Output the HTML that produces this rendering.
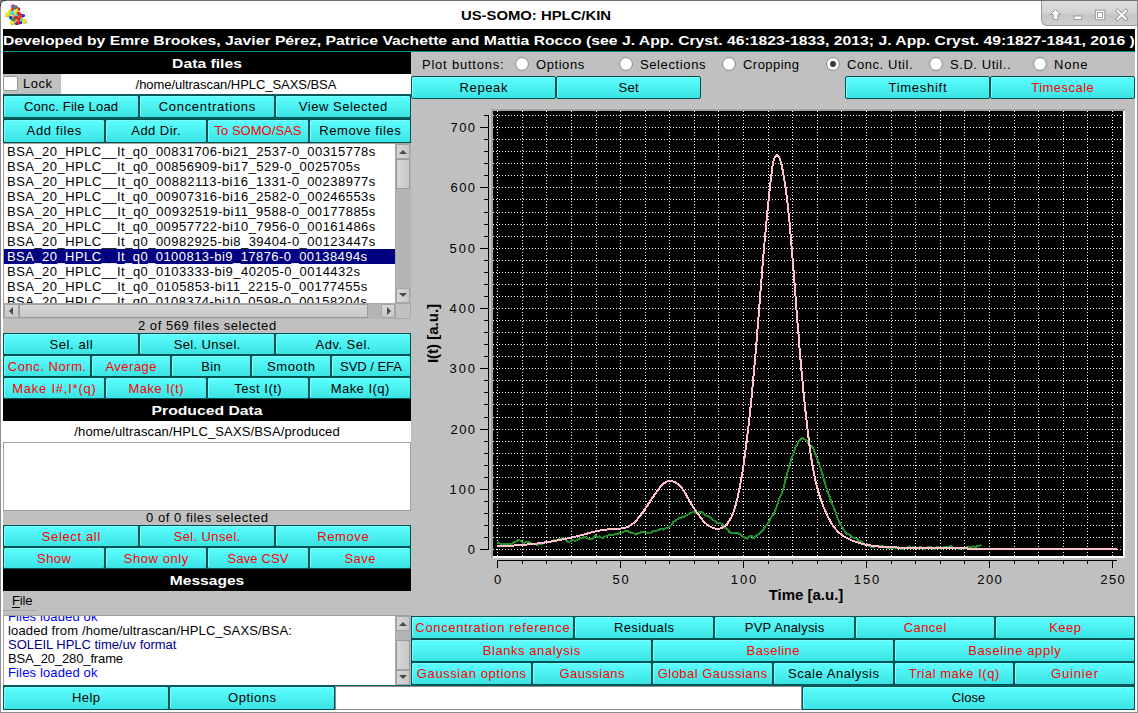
<!DOCTYPE html><html><head><meta charset="utf-8"><style>*{margin:0;padding:0;box-sizing:border-box}
html,body{width:1138px;height:713px;overflow:hidden;background:#c0c0c0}
body{position:relative;font-family:"Liberation Sans",sans-serif;font-size:13px;color:#000}
.a{position:absolute}
.t{white-space:nowrap;line-height:15px}
.btn{border:1px solid #005252;border-radius:2px;background:linear-gradient(#5efefe,#3ae4e4);box-shadow:inset 1px 1px 0 #7effff}
</style></head><body><div class="a" style="left:0;top:0;width:1138px;height:713px;background:#c0c0c0"></div>
<div class="a" style="left:0px;top:0px;width:1138px;height:29px;background:#fff"></div>
<div class="a" style="left:0px;top:0px;width:1138px;height:1px;background:#6e6e6e"></div>
<div class="a" style="left:0px;top:0px;width:1px;height:713px;background:#8c8c8c"></div>
<div class="a" style="left:1137px;top:0px;width:1px;height:713px;background:#8c8c8c"></div>
<div class="a" style="left:0px;top:712px;width:1138px;height:1px;background:#8c8c8c"></div>
<div class="a" style="left:1px;top:29px;width:2px;height:683px;background:#fff"></div>
<div class="a" style="left:1135px;top:29px;width:2px;height:683px;background:#fff"></div>
<div class="a" style="left:1px;top:710px;width:1136px;height:2px;background:#fff"></div>
<div class="a" style="left:0;top:0;width:6px;height:6px;background:#fff;border-top-left-radius:5px;border-left:1px solid #333;border-top:1px solid #333"></div>
<div class="a t" style="left:400px;width:272px;text-align:center;top:8px;font-size:13px;font-weight:bold;color:#000;transform:scaleX(1.1423)">US-SOMO: HPLC/KIN</div>
<div class="a" style="left:1041px;top:1px;width:96px;height:25px;background:linear-gradient(#dedede,#d4d4d4 45%,#c6c6c6 60%,#d0d0d0);border-left:1px solid #9a9a9a;border-bottom:1px solid #9a9a9a;border-bottom-left-radius:6px"></div>
<svg class="a" style="left:1041px;top:0" width="96" height="28" viewBox="1041 0 96 28">
<g fill="#fff" stroke="#8a8a8a" stroke-width="0.8">
<path d="M1055.5 9.5 L1060.5 14.5 L1057.8 14.5 L1057.8 19.5 L1053.2 19.5 L1053.2 14.5 L1050.5 14.5 Z"/>
<rect x="1074" y="16" width="7.7" height="3.4"/>
<rect x="1095.3" y="10.2" width="9.5" height="9.5"/>
</g>
<rect x="1097.6" y="12.5" width="4.9" height="4.9" fill="none" stroke="#8a8a8a" stroke-width="0.8"/>
<g stroke="#8a8a8a" stroke-width="3.6" stroke-linecap="square"><path d="M1117.5 10.7 L1126 19 M1126 10.7 L1117.5 19"/></g>
<g stroke="#fff" stroke-width="2" stroke-linecap="square"><path d="M1117.5 10.7 L1126 19 M1126 10.7 L1117.5 19"/></g>
</svg>
<svg class="a" style="left:0;top:0" width="32" height="28"><defs><radialGradient id="sg0" cx="0.4" cy="0.38" r="0.65"><stop offset="0" stop-color="#4b4be7"/><stop offset="0.6" stop-color="#1010e0"/><stop offset="1" stop-color="#0b0b9c"/></radialGradient><radialGradient id="sg1" cx="0.4" cy="0.38" r="0.65"><stop offset="0" stop-color="#57e7e7"/><stop offset="0.6" stop-color="#20e0e0"/><stop offset="1" stop-color="#169c9c"/></radialGradient><radialGradient id="sg2" cx="0.4" cy="0.38" r="0.65"><stop offset="0" stop-color="#5f9b77"/><stop offset="0.6" stop-color="#2a7a4a"/><stop offset="1" stop-color="#1d5533"/></radialGradient><radialGradient id="sg3" cx="0.4" cy="0.38" r="0.65"><stop offset="0" stop-color="#d859d8"/><stop offset="0.6" stop-color="#cc22cc"/><stop offset="1" stop-color="#8e178e"/></radialGradient><radialGradient id="sg4" cx="0.4" cy="0.38" r="0.65"><stop offset="0" stop-color="#e74b4b"/><stop offset="0.6" stop-color="#e01010"/><stop offset="1" stop-color="#9c0b0b"/></radialGradient><radialGradient id="sg5" cx="0.4" cy="0.38" r="0.65"><stop offset="0" stop-color="#ede74b"/><stop offset="0.6" stop-color="#e8e010"/><stop offset="1" stop-color="#a29c0b"/></radialGradient><radialGradient id="sg6" cx="0.4" cy="0.38" r="0.65"><stop offset="0" stop-color="#f3ab4b"/><stop offset="0.6" stop-color="#f09010"/><stop offset="1" stop-color="#a8640b"/></radialGradient></defs><circle cx="13.0" cy="6.3" r="2.13" fill="url(#sg3)"/><circle cx="15.3" cy="7.6" r="2.35" fill="url(#sg2)"/><circle cx="18.2" cy="9.2" r="2.02" fill="url(#sg4)"/><circle cx="12.2" cy="9.8" r="1.46" fill="url(#sg4)"/><circle cx="10.0" cy="11.0" r="1.79" fill="url(#sg5)"/><circle cx="16.8" cy="10.5" r="1.90" fill="url(#sg5)"/><circle cx="12.3" cy="13.0" r="2.13" fill="url(#sg1)"/><circle cx="7.9" cy="14.5" r="2.58" fill="url(#sg5)"/><circle cx="15.6" cy="13.2" r="1.68" fill="url(#sg5)"/><circle cx="18.7" cy="13.8" r="2.13" fill="url(#sg4)"/><circle cx="21.5" cy="15.7" r="1.90" fill="url(#sg4)"/><circle cx="23.5" cy="15.8" r="1.46" fill="url(#sg0)"/><circle cx="13.5" cy="16.0" r="1.23" fill="url(#sg6)"/><circle cx="16.8" cy="15.8" r="1.68" fill="url(#sg1)"/><circle cx="10.8" cy="17.8" r="1.68" fill="url(#sg0)"/><circle cx="15.8" cy="17.5" r="1.79" fill="url(#sg4)"/><circle cx="18.8" cy="18.5" r="2.13" fill="url(#sg4)"/><circle cx="13.3" cy="19.6" r="2.35" fill="url(#sg2)"/><circle cx="21.5" cy="18.8" r="1.23" fill="url(#sg6)"/><circle cx="16.0" cy="20.5" r="1.23" fill="url(#sg6)"/><circle cx="21.0" cy="20.5" r="1.46" fill="url(#sg1)"/><circle cx="24.6" cy="21.4" r="2.35" fill="url(#sg5)"/><circle cx="12.4" cy="23.0" r="2.35" fill="url(#sg5)"/><circle cx="16.5" cy="23.5" r="1.57" fill="url(#sg0)"/><circle cx="18.5" cy="22.7" r="2.13" fill="url(#sg4)"/><circle cx="21.0" cy="22.8" r="1.23" fill="url(#sg0)"/></svg>
<div class="a" style="left:3px;top:29px;width:1132px;height:22px;background:#000"></div>
<div class="a" style="left:3px;top:51px;width:1132px;height:1px;background:#0b8a8a"></div>
<div class="a t" style="left:3px;top:33px;font-size:13px;font-weight:bold;color:#fff;transform-origin:0 0;transform:scaleX(1.2099);">Developed by Emre Brookes, Javier Pérez, Patrice Vachette and Mattia Rocco (see J. App. Cryst. 46:1823-1833, 2013; J. App. Cryst. 49:1827-1841, 2016 )</div>
<div class="a" style="left:3px;top:52px;width:408px;height:22px;background:#000"></div>
<div class="a t" style="left:3px;width:408px;text-align:center;top:56px;font-size:13px;font-weight:bold;color:#fff;transform:scaleX(1.2070)">Data files</div>
<div class="a" style="left:3px;top:74px;width:58px;height:21px;background:#c0c0c0"></div>
<div class="a" style="left:3px;top:76px;width:15px;height:15px;background:#fff;border:1px solid #9a9a9a;border-radius:2px"></div>
<div class="a t" style="left:23px;top:76px;font-size:13px;color:#000;letter-spacing:0.480px;">Lock</div>
<div class="a" style="left:61px;top:74px;width:350px;height:21px;background:#fff"></div>
<div class="a t" style="left:61px;width:350px;text-align:center;top:77px;font-size:13px;color:#000;letter-spacing:-0.054px;text-indent:-0.054px">/home/ultrascan/HPLC_SAXS/BSA</div>
<div class="a" style="left:3px;top:94px;width:408px;height:50px;background:#006262"></div>
<div class="a btn" style="left:3px;top:95px;width:136px;height:23px"></div>
<div class="a t" style="left:3px;width:136px;text-align:center;top:99px;font-size:13px;color:#000;letter-spacing:0.221px;text-indent:0.221px">Conc. File Load</div>
<div class="a btn" style="left:139px;top:95px;width:136px;height:23px"></div>
<div class="a t" style="left:139px;width:136px;text-align:center;top:99px;font-size:13px;color:#000;letter-spacing:0.697px;text-indent:0.697px">Concentrations</div>
<div class="a btn" style="left:275px;top:95px;width:136px;height:23px"></div>
<div class="a t" style="left:275px;width:136px;text-align:center;top:99px;font-size:13px;color:#000;letter-spacing:0.517px;text-indent:0.517px">View Selected</div>
<div class="a btn" style="left:3px;top:119px;width:102px;height:24px"></div>
<div class="a t" style="left:3px;width:102px;text-align:center;top:123px;font-size:13px;color:#000;letter-spacing:0.612px;text-indent:0.612px">Add files</div>
<div class="a btn" style="left:105px;top:119px;width:102px;height:24px"></div>
<div class="a t" style="left:105px;width:102px;text-align:center;top:123px;font-size:13px;color:#000;letter-spacing:0.429px;text-indent:0.429px">Add Dir.</div>
<div class="a btn" style="left:207px;top:119px;width:102px;height:24px"></div>
<div class="a t" style="left:207px;width:102px;text-align:center;top:123px;font-size:13px;color:#ff0000;letter-spacing:0.024px;text-indent:0.024px">To SOMO/SAS</div>
<div class="a btn" style="left:309px;top:119px;width:102px;height:24px"></div>
<div class="a t" style="left:309px;width:102px;text-align:center;top:123px;font-size:13px;color:#000;letter-spacing:0.578px;text-indent:0.578px">Remove files</div>
<div class="a" style="left:3px;top:143px;width:408px;height:176px;background:#fff;border:1px solid #a0a0a0"></div>
<div class="a" style="left:4px;top:144px;width:391px;height:159px;overflow:hidden">
<div class="a t" style="left:3px;top:0px;line-height:15px;font-size:13px;color:#000;letter-spacing:0.459px">BSA_20_HPLC__It_q0_00831706-bi21_2537-0_00315778s</div>
<div class="a t" style="left:3px;top:15px;line-height:15px;font-size:13px;color:#000;letter-spacing:0.460px">BSA_20_HPLC__It_q0_00856909-bi17_529-0_0025705s</div>
<div class="a t" style="left:3px;top:30px;line-height:15px;font-size:13px;color:#000;letter-spacing:0.480px">BSA_20_HPLC__It_q0_00882113-bi16_1331-0_00238977s</div>
<div class="a t" style="left:3px;top:45px;line-height:15px;font-size:13px;color:#000;letter-spacing:0.459px">BSA_20_HPLC__It_q0_00907316-bi16_2582-0_00246553s</div>
<div class="a t" style="left:3px;top:60px;line-height:15px;font-size:13px;color:#000;letter-spacing:0.480px">BSA_20_HPLC__It_q0_00932519-bi11_9588-0_00177885s</div>
<div class="a t" style="left:3px;top:75px;line-height:15px;font-size:13px;color:#000;letter-spacing:0.459px">BSA_20_HPLC__It_q0_00957722-bi10_7956-0_00161486s</div>
<div class="a t" style="left:3px;top:90px;line-height:15px;font-size:13px;color:#000;letter-spacing:0.459px">BSA_20_HPLC__It_q0_00982925-bi8_39404-0_00123447s</div>
<div class="a" style="left:0;top:105px;width:391px;height:15px;background:#000080"></div>
<div class="a t" style="left:3px;top:105px;line-height:15px;font-size:13px;color:#fff;letter-spacing:0.449px">BSA_20_HPLC__It_q0_0100813-bi9_17876-0_00138494s</div>
<div class="a t" style="left:3px;top:120px;line-height:15px;font-size:13px;color:#000;letter-spacing:0.460px">BSA_20_HPLC__It_q0_0103333-bi9_40205-0_0014432s</div>
<div class="a t" style="left:3px;top:135px;line-height:15px;font-size:13px;color:#000;letter-spacing:0.470px">BSA_20_HPLC__It_q0_0105853-bi11_2215-0_00177455s</div>
<div class="a t" style="left:3px;top:150px;line-height:15px;font-size:13px;color:#000;letter-spacing:0.449px">BSA_20_HPLC__It_q0_0108374-bi10_0598-0_00158204s</div>
</div>
<div class="a" style="left:395px;top:144px;width:16px;height:159px;background:#b4b4b4;border-left:1px solid #a8a8a8"></div>
<div class="a" style="left:396px;top:159px;width:14px;height:30px;background:linear-gradient(90deg,#d6d6d6,#c8c8c8);border:1px solid #9a9a9a"></div>
<div class="a" style="left:396px;top:144px;width:14px;height:15px;background:linear-gradient(90deg,#d6d6d6,#c8c8c8);border:1px solid #a4a4a4"></div>
<div class="a" style="left:396px;top:288px;width:14px;height:15px;background:linear-gradient(90deg,#d6d6d6,#c8c8c8);border:1px solid #a4a4a4"></div>
<svg class="a" style="left:395px;top:144px" width="16" height="15"><path d="M4 10 L12 10 L8 6 Z" fill="#4a4a4a"/></svg>
<svg class="a" style="left:395px;top:288px" width="16" height="15"><path d="M4 5 L12 5 L8 9 Z" fill="#4a4a4a"/></svg>
<div class="a" style="left:4px;top:303px;width:391px;height:16px;background:#b4b4b4;border-top:1px solid #a8a8a8"></div>
<div class="a" style="left:4px;top:304px;width:15px;height:14px;background:linear-gradient(#d6d6d6,#c8c8c8);border:1px solid #a4a4a4"></div>
<div class="a" style="left:19px;top:304px;width:349px;height:14px;background:linear-gradient(#d6d6d6,#c8c8c8);border:1px solid #9a9a9a"></div>
<div class="a" style="left:381px;top:304px;width:14px;height:14px;background:linear-gradient(#d6d6d6,#c8c8c8);border:1px solid #a4a4a4"></div>
<svg class="a" style="left:4px;top:304px" width="15" height="14"><path d="M9 3 L9 11 L5 7 Z" fill="#4a4a4a"/></svg>
<svg class="a" style="left:381px;top:304px" width="15" height="14"><path d="M6 3 L6 11 L10 7 Z" fill="#4a4a4a"/></svg>
<div class="a" style="left:395px;top:303px;width:16px;height:16px;background:#c0c0c0;border:1px solid #a8a8a8"></div>
<div class="a t" style="left:3px;width:408px;text-align:center;top:318px;font-size:13px;color:#000;letter-spacing:0.568px;text-indent:0.568px">2 of 569 files selected</div>
<div class="a" style="left:3px;top:333px;width:408px;height:66px;background:#006262"></div>
<div class="a btn" style="left:3px;top:333px;width:136px;height:22px"></div>
<div class="a t" style="left:3px;width:136px;text-align:center;top:337px;font-size:13px;color:#000;letter-spacing:0.594px;text-indent:0.594px">Sel. all</div>
<div class="a btn" style="left:139px;top:333px;width:136px;height:22px"></div>
<div class="a t" style="left:139px;width:136px;text-align:center;top:337px;font-size:13px;color:#000;letter-spacing:0.368px;text-indent:0.368px">Sel. Unsel.</div>
<div class="a btn" style="left:275px;top:333px;width:136px;height:22px"></div>
<div class="a t" style="left:275px;width:136px;text-align:center;top:337px;font-size:13px;color:#000;letter-spacing:0.487px;text-indent:0.487px">Adv. Sel.</div>
<div class="a btn" style="left:3px;top:355px;width:88px;height:22px"></div>
<div class="a t" style="left:3px;width:88px;text-align:center;top:359px;font-size:13px;color:#ff0000;letter-spacing:0.544px;text-indent:0.544px">Conc. Norm.</div>
<div class="a btn" style="left:91px;top:355px;width:80px;height:22px"></div>
<div class="a t" style="left:91px;width:80px;text-align:center;top:359px;font-size:13px;color:#ff0000;letter-spacing:0.493px;text-indent:0.493px">Average</div>
<div class="a btn" style="left:171px;top:355px;width:80px;height:22px"></div>
<div class="a t" style="left:171px;width:80px;text-align:center;top:359px;font-size:13px;color:#000;letter-spacing:0.310px;text-indent:0.310px">Bin</div>
<div class="a btn" style="left:251px;top:355px;width:80px;height:22px"></div>
<div class="a t" style="left:251px;width:80px;text-align:center;top:359px;font-size:13px;color:#000;letter-spacing:0.608px;text-indent:0.608px">Smooth</div>
<div class="a btn" style="left:331px;top:355px;width:80px;height:22px"></div>
<div class="a t" style="left:331px;width:80px;text-align:center;top:359px;font-size:13px;color:#000;letter-spacing:-0.030px;text-indent:-0.030px">SVD / EFA</div>
<div class="a btn" style="left:3px;top:377px;width:102px;height:22px"></div>
<div class="a t" style="left:3px;width:102px;text-align:center;top:381px;font-size:13px;color:#ff0000;letter-spacing:0.777px;text-indent:0.777px">Make I#,I*(q)</div>
<div class="a btn" style="left:105px;top:377px;width:102px;height:22px"></div>
<div class="a t" style="left:105px;width:102px;text-align:center;top:381px;font-size:13px;color:#ff0000;letter-spacing:0.487px;text-indent:0.487px">Make I(t)</div>
<div class="a btn" style="left:207px;top:377px;width:102px;height:22px"></div>
<div class="a t" style="left:207px;width:102px;text-align:center;top:381px;font-size:13px;color:#000;letter-spacing:0.505px;text-indent:0.505px">Test I(t)</div>
<div class="a btn" style="left:309px;top:377px;width:102px;height:22px"></div>
<div class="a t" style="left:309px;width:102px;text-align:center;top:381px;font-size:13px;color:#000;letter-spacing:0.478px;text-indent:0.478px">Make I(q)</div>
<div class="a" style="left:3px;top:399px;width:408px;height:22px;background:#000"></div>
<div class="a t" style="left:3px;width:408px;text-align:center;top:403px;font-size:13px;font-weight:bold;color:#fff;transform:scaleX(1.2088)">Produced Data</div>
<div class="a" style="left:3px;top:421px;width:408px;height:21px;background:#fff"></div>
<div class="a t" style="left:3px;width:408px;text-align:center;top:424px;font-size:13px;color:#000;letter-spacing:0.143px;text-indent:0.143px">/home/ultrascan/HPLC_SAXS/BSA/produced</div>
<div class="a" style="left:3px;top:442px;width:408px;height:69px;background:#fff;border:1px solid #a0a0a0"></div>
<div class="a t" style="left:3px;width:408px;text-align:center;top:510px;font-size:13px;color:#000;letter-spacing:0.530px;text-indent:0.530px">0 of 0 files selected</div>
<div class="a" style="left:3px;top:525px;width:408px;height:44px;background:#006262"></div>
<div class="a btn" style="left:3px;top:525px;width:136px;height:22px"></div>
<div class="a t" style="left:3px;width:136px;text-align:center;top:529px;font-size:13px;color:#ff0000;letter-spacing:0.649px;text-indent:0.649px">Select all</div>
<div class="a btn" style="left:139px;top:525px;width:136px;height:22px"></div>
<div class="a t" style="left:139px;width:136px;text-align:center;top:529px;font-size:13px;color:#ff0000;letter-spacing:0.368px;text-indent:0.368px">Sel. Unsel.</div>
<div class="a btn" style="left:275px;top:525px;width:136px;height:22px"></div>
<div class="a t" style="left:275px;width:136px;text-align:center;top:529px;font-size:13px;color:#ff0000;letter-spacing:0.596px;text-indent:0.596px">Remove</div>
<div class="a btn" style="left:3px;top:547px;width:102px;height:22px"></div>
<div class="a t" style="left:3px;width:102px;text-align:center;top:551px;font-size:13px;color:#ff0000;letter-spacing:0.447px;text-indent:0.447px">Show</div>
<div class="a btn" style="left:105px;top:547px;width:102px;height:22px"></div>
<div class="a t" style="left:105px;width:102px;text-align:center;top:551px;font-size:13px;color:#ff0000;letter-spacing:0.587px;text-indent:0.587px">Show only</div>
<div class="a btn" style="left:207px;top:547px;width:102px;height:22px"></div>
<div class="a t" style="left:207px;width:102px;text-align:center;top:551px;font-size:13px;color:#ff0000;letter-spacing:0.111px;text-indent:0.111px">Save CSV</div>
<div class="a btn" style="left:309px;top:547px;width:102px;height:22px"></div>
<div class="a t" style="left:309px;width:102px;text-align:center;top:551px;font-size:13px;color:#ff0000;letter-spacing:0.467px;text-indent:0.467px">Save</div>
<div class="a" style="left:3px;top:569px;width:408px;height:22px;background:#000"></div>
<div class="a t" style="left:3px;width:408px;text-align:center;top:573px;font-size:13px;font-weight:bold;color:#fff;transform:scaleX(1.1967)">Messages</div>
<div class="a t" style="left:12px;top:593px;font-size:13px;color:#000;letter-spacing:-0.133px;">File</div>
<div class="a" style="left:12px;top:607px;width:8px;height:1px;background:#000"></div>
<div class="a" style="left:3px;top:610px;width:34px;height:1px;background:#a8a8a8"></div>
<div class="a" style="left:3px;top:615px;width:408px;height:71px;background:#fff;border:1px solid #a0a0a0"></div>
<div class="a" style="left:4px;top:616px;width:391px;height:69px;overflow:hidden">
<div class="a t" style="left:4px;top:-7px;line-height:15px;font-size:13px;color:#0000ff;letter-spacing:0.143px">Files loaded ok</div>
<div class="a t" style="left:4px;top:7px;line-height:15px;font-size:13px;color:#000;letter-spacing:0.137px">loaded from /home/ultrascan/HPLC_SAXS/BSA:</div>
<div class="a t" style="left:4px;top:21px;line-height:15px;font-size:13px;color:#00008c;letter-spacing:-0.040px">SOLEIL HPLC time/uv format</div>
<div class="a t" style="left:4px;top:35px;line-height:15px;font-size:13px;color:#000;letter-spacing:-0.133px">BSA_20_280_frame</div>
<div class="a t" style="left:4px;top:49px;line-height:15px;font-size:13px;color:#0000ff;letter-spacing:0.143px">Files loaded ok</div>
</div>
<div class="a" style="left:395px;top:616px;width:16px;height:69px;background:#b4b4b4;border-left:1px solid #a8a8a8"></div>
<div class="a" style="left:396px;top:640px;width:14px;height:30px;background:linear-gradient(90deg,#d6d6d6,#c8c8c8);border:1px solid #9a9a9a"></div>
<div class="a" style="left:396px;top:616px;width:14px;height:15px;background:linear-gradient(90deg,#d6d6d6,#c8c8c8);border:1px solid #a4a4a4"></div>
<div class="a" style="left:396px;top:670px;width:14px;height:15px;background:linear-gradient(90deg,#d6d6d6,#c8c8c8);border:1px solid #a4a4a4"></div>
<svg class="a" style="left:395px;top:616px" width="16" height="15"><path d="M4 10 L12 10 L8 6 Z" fill="#4a4a4a"/></svg>
<svg class="a" style="left:395px;top:670px" width="16" height="15"><path d="M4 5 L12 5 L8 9 Z" fill="#4a4a4a"/></svg>
<div class="a" style="left:3px;top:685px;width:1132px;height:25px;background:#006262"></div>
<div class="a btn" style="left:3px;top:686px;width:166px;height:24px"></div>
<div class="a t" style="left:3px;width:166px;text-align:center;top:690px;font-size:13px;color:#000;letter-spacing:0.480px;text-indent:0.480px">Help</div>
<div class="a btn" style="left:169px;top:686px;width:166px;height:24px"></div>
<div class="a t" style="left:169px;width:166px;text-align:center;top:690px;font-size:13px;color:#000;letter-spacing:0.507px;text-indent:0.507px">Options</div>
<div class="a" style="left:335px;top:686px;width:467px;height:24px;background:#fff;border:1px solid #8c8c8c"></div>
<div class="a btn" style="left:802px;top:686px;width:333px;height:24px"></div>
<div class="a t" style="left:802px;width:333px;text-align:center;top:690px;font-size:13px;color:#000;letter-spacing:0.085px;text-indent:0.085px">Close</div>
<div class="a t" style="left:422px;top:57px;font-size:13px;color:#000;letter-spacing:0.775px;">Plot buttons:</div>
<svg class="a" style="left:514px;top:56px" width="16" height="16"><circle cx="8" cy="8" r="6.4" fill="#fff" stroke="#7a7a7a" stroke-width="0.9"/></svg>
<div class="a t" style="left:536px;top:57px;font-size:13px;color:#000;letter-spacing:0.567px;">Options</div>
<svg class="a" style="left:618px;top:56px" width="16" height="16"><circle cx="8" cy="8" r="6.4" fill="#fff" stroke="#7a7a7a" stroke-width="0.9"/></svg>
<div class="a t" style="left:640px;top:57px;font-size:13px;color:#000;letter-spacing:0.611px;">Selections</div>
<svg class="a" style="left:721px;top:56px" width="16" height="16"><circle cx="8" cy="8" r="6.4" fill="#fff" stroke="#7a7a7a" stroke-width="0.9"/></svg>
<div class="a t" style="left:743px;top:57px;font-size:13px;color:#000;letter-spacing:0.471px;">Cropping</div>
<svg class="a" style="left:825px;top:56px" width="16" height="16"><circle cx="8" cy="8" r="6.4" fill="#fff" stroke="#7a7a7a" stroke-width="0.9"/><circle cx="8" cy="8" r="3" fill="#3a3a3a"/></svg>
<div class="a t" style="left:847px;top:57px;font-size:13px;color:#000;letter-spacing:0.560px;">Conc. Util.</div>
<svg class="a" style="left:928px;top:56px" width="16" height="16"><circle cx="8" cy="8" r="6.4" fill="#fff" stroke="#7a7a7a" stroke-width="0.9"/></svg>
<div class="a t" style="left:950px;top:57px;font-size:13px;color:#000;letter-spacing:0.560px;">S.D. Util..</div>
<svg class="a" style="left:1032px;top:56px" width="16" height="16"><circle cx="8" cy="8" r="6.4" fill="#fff" stroke="#7a7a7a" stroke-width="0.9"/></svg>
<div class="a t" style="left:1054px;top:57px;font-size:13px;color:#000;letter-spacing:0.800px;">None</div>
<div class="a btn" style="left:411px;top:76px;width:145px;height:23px"></div>
<div class="a t" style="left:411px;width:145px;text-align:center;top:80px;font-size:13px;color:#000;letter-spacing:0.612px;text-indent:0.612px">Repeak</div>
<div class="a btn" style="left:556px;top:76px;width:145px;height:23px"></div>
<div class="a t" style="left:556px;width:145px;text-align:center;top:80px;font-size:13px;color:#000;letter-spacing:0.300px;text-indent:0.300px">Set</div>
<div class="a btn" style="left:845px;top:76px;width:145px;height:23px"></div>
<div class="a t" style="left:845px;width:145px;text-align:center;top:80px;font-size:13px;color:#000;letter-spacing:0.725px;text-indent:0.725px">Timeshift</div>
<div class="a btn" style="left:990px;top:76px;width:145px;height:23px"></div>
<div class="a t" style="left:990px;width:145px;text-align:center;top:80px;font-size:13px;color:#ff0000;letter-spacing:0.465px;text-indent:0.465px">Timescale</div>
<div class="a" style="left:411px;top:616px;width:724px;height:70px;background:#006262"></div>
<div class="a btn" style="left:411px;top:616px;width:163px;height:23px"></div>
<div class="a t" style="left:411px;width:163px;text-align:center;top:620px;font-size:13px;color:#ff0000;letter-spacing:0.676px;text-indent:0.676px">Concentration reference</div>
<div class="a btn" style="left:574px;top:616px;width:140px;height:23px"></div>
<div class="a t" style="left:574px;width:140px;text-align:center;top:620px;font-size:13px;color:#000;letter-spacing:0.350px;text-indent:0.350px">Residuals</div>
<div class="a btn" style="left:714px;top:616px;width:141px;height:23px"></div>
<div class="a t" style="left:714px;width:141px;text-align:center;top:620px;font-size:13px;color:#000;letter-spacing:0.218px;text-indent:0.218px">PVP Analysis</div>
<div class="a btn" style="left:855px;top:616px;width:140px;height:23px"></div>
<div class="a t" style="left:855px;width:140px;text-align:center;top:620px;font-size:13px;color:#ff0000;letter-spacing:0.432px;text-indent:0.432px">Cancel</div>
<div class="a btn" style="left:995px;top:616px;width:140px;height:23px"></div>
<div class="a t" style="left:995px;width:140px;text-align:center;top:620px;font-size:13px;color:#ff0000;letter-spacing:0.460px;text-indent:0.460px">Keep</div>
<div class="a btn" style="left:411px;top:639px;width:241px;height:23px"></div>
<div class="a t" style="left:411px;width:241px;text-align:center;top:643px;font-size:13px;color:#ff0000;letter-spacing:0.574px;text-indent:0.574px">Blanks analysis</div>
<div class="a btn" style="left:652px;top:639px;width:242px;height:23px"></div>
<div class="a t" style="left:652px;width:242px;text-align:center;top:643px;font-size:13px;color:#ff0000;letter-spacing:0.420px;text-indent:0.420px">Baseline</div>
<div class="a btn" style="left:894px;top:639px;width:241px;height:23px"></div>
<div class="a t" style="left:894px;width:241px;text-align:center;top:643px;font-size:13px;color:#ff0000;letter-spacing:0.626px;text-indent:0.626px">Baseline apply</div>
<div class="a btn" style="left:411px;top:662px;width:121px;height:23px"></div>
<div class="a t" style="left:411px;width:121px;text-align:center;top:666px;font-size:13px;color:#ff0000;letter-spacing:0.587px;text-indent:0.587px">Gaussian options</div>
<div class="a btn" style="left:532px;top:662px;width:120px;height:23px"></div>
<div class="a t" style="left:532px;width:120px;text-align:center;top:666px;font-size:13px;color:#ff0000;letter-spacing:0.462px;text-indent:0.462px">Gaussians</div>
<div class="a btn" style="left:652px;top:662px;width:121px;height:23px"></div>
<div class="a t" style="left:652px;width:121px;text-align:center;top:666px;font-size:13px;color:#ff0000;letter-spacing:0.453px;text-indent:0.453px">Global Gaussians</div>
<div class="a btn" style="left:773px;top:662px;width:121px;height:23px"></div>
<div class="a t" style="left:773px;width:121px;text-align:center;top:666px;font-size:13px;color:#000;letter-spacing:0.552px;text-indent:0.552px">Scale Analysis</div>
<div class="a btn" style="left:894px;top:662px;width:120px;height:23px"></div>
<div class="a t" style="left:894px;width:120px;text-align:center;top:666px;font-size:13px;color:#ff0000;letter-spacing:0.511px;text-indent:0.511px">Trial make I(q)</div>
<div class="a btn" style="left:1014px;top:662px;width:121px;height:23px"></div>
<div class="a t" style="left:1014px;width:121px;text-align:center;top:666px;font-size:13px;color:#ff0000;letter-spacing:0.843px;text-indent:0.843px">Guinier</div>
<svg class="a" style="left:0;top:0" width="1138" height="713" viewBox="0 0 1138 713"><rect x="491" y="109" width="634" height="449" fill="#ffffff"/><path d="M491 109 H1125 V111 H493 V558 H491 Z" fill="#a4a4a4"/><rect x="493" y="111" width="630" height="445" fill="#000"/><path d="M497.5 111V556M522.5 111V556M546.5 111V556M571.5 111V556M596.5 111V556M620.5 111V556M645.5 111V556M669.5 111V556M694.5 111V556M718.5 111V556M743.5 111V556M768.5 111V556M792.5 111V556M817.5 111V556M841.5 111V556M866.5 111V556M891.5 111V556M915.5 111V556M940.5 111V556M964.5 111V556M989.5 111V556M1014.5 111V556M1038.5 111V556M1063.5 111V556M1087.5 111V556M1112.5 111V556" stroke="#fff" stroke-width="1" stroke-dasharray="1 2" shape-rendering="crispEdges"/><path d="M493 549.5H1123M493 537.5H1123M493 525.5H1123M493 513.5H1123M493 501.5H1123M493 489.5H1123M493 477.5H1123M493 465.5H1123M493 453.5H1123M493 441.5H1123M493 429.5H1123M493 417.5H1123M493 404.5H1123M493 392.5H1123M493 380.5H1123M493 368.5H1123M493 356.5H1123M493 344.5H1123M493 332.5H1123M493 320.5H1123M493 308.5H1123M493 296.5H1123M493 284.5H1123M493 272.5H1123M493 260.5H1123M493 248.5H1123M493 236.5H1123M493 224.5H1123M493 212.5H1123M493 199.5H1123M493 187.5H1123M493 175.5H1123M493 163.5H1123M493 151.5H1123M493 139.5H1123M493 127.5H1123M493 115.5H1123" stroke="#fff" stroke-width="1" stroke-dasharray="1 2" shape-rendering="crispEdges"/></svg>
<svg class="a" style="left:0;top:0" width="1138" height="713"><defs><clipPath id="cp"><rect x="493" y="111" width="630" height="445"/></clipPath></defs><g clip-path="url(#cp)" fill="none" stroke-width="2" stroke-linejoin="round" shape-rendering="crispEdges"><polyline points="497.5,543.5 499.5,543.3 501.5,544.4 503.5,543.6 505.5,544.6 507.5,544.3 509.5,543.9 511.5,544.4 513.5,542.2 515.5,541.7 517.5,540.4 519.5,540.2 521.5,541.7 523.5,543.4 525.5,542.1 527.5,541.9 529.5,542.3 531.5,543.5 533.5,543.5 535.5,543.7 537.5,545.2 539.5,543.7 541.5,544.5 543.5,542.8 545.5,542.1 547.5,541.7 549.5,541.7 551.5,542.0 553.5,540.2 555.5,540.3 557.5,539.8 559.5,538.7 561.5,538.5 563.5,538.2 565.5,539.9 567.5,541.9 569.5,541.9 571.5,540.4 573.5,540.3 575.5,540.8 577.5,539.7 579.5,538.4 581.5,538.5 583.5,537.6 585.5,536.6 587.5,538.2 589.5,539.1 591.5,539.1 593.5,537.3 595.5,535.2 597.5,537.2 599.5,536.4 601.5,537.8 603.5,537.9 605.5,536.0 607.5,535.8 609.5,534.4 611.5,534.9 613.5,534.6 615.5,534.0 617.5,534.4 619.5,533.0 621.5,532.8 623.5,531.8 625.5,530.9 627.5,530.9 629.5,532.1 631.5,532.8 633.5,533.0 635.5,534.8 637.5,533.5 639.5,533.2 641.5,531.7 643.5,532.0 645.5,532.7 647.5,532.7 649.5,532.5 651.5,532.5 653.5,530.9 655.5,531.2 657.5,530.1 659.5,529.5 661.5,528.9 663.5,529.7 665.5,528.1 667.5,527.8 669.5,526.4 671.5,525.2 673.5,521.8 675.5,520.7 677.5,519.0 679.5,518.0 681.5,517.5 683.5,517.2 685.5,515.8 687.5,514.8 689.5,513.3 691.5,512.6 693.5,511.9 695.5,513.5 697.5,512.7 699.5,511.8 701.5,511.8 703.5,513.7 705.5,515.3 707.5,516.1 709.5,516.9 711.5,518.9 713.5,520.1 715.5,521.7 717.5,523.0 719.5,523.1 721.5,523.7 723.5,526.0 725.5,528.1 727.5,529.0 729.5,532.4 731.5,532.6 733.5,532.9 735.5,533.0 737.5,532.6 739.5,534.1 741.5,535.1 743.5,537.4 745.5,537.6 747.5,538.6 749.5,536.0 751.5,535.7 753.5,538.4 755.5,536.6 757.5,534.9 759.5,533.6 761.5,531.3 763.5,529.3 765.5,526.0 767.5,524.2 769.5,520.5 771.5,517.1 773.5,514.6 775.5,509.7 777.5,504.2 779.5,498.2 781.5,494.0 783.5,488.1 785.5,479.6 787.5,472.3 789.5,465.1 791.5,458.6 793.5,453.0 795.5,446.9 797.5,443.9 799.5,440.1 801.5,438.1 803.5,438.3 805.5,439.9 807.5,441.9 809.5,444.7 811.5,445.7 813.5,449.2 815.5,454.6 817.5,459.6 819.5,464.9 821.5,470.8 823.5,478.0 825.5,484.7 827.5,491.4 829.5,496.6 831.5,502.5 833.5,507.0 835.5,511.9 837.5,517.7 839.5,522.7 841.5,526.1 843.5,529.3 845.5,532.6 847.5,534.1 849.5,534.7 851.5,536.7 853.5,537.7 855.5,538.3 857.5,539.6 859.5,541.2 861.5,541.7 863.5,543.6 865.5,545.0 867.5,544.3 869.5,546.1 871.5,546.9 873.5,547.2 875.5,545.8 877.5,545.6 879.5,545.7 881.5,545.9 883.5,546.1 885.5,547.4 887.5,548.3 889.5,548.3 891.5,547.5 893.5,548.1 895.5,548.6 897.5,546.8 899.5,548.4 901.5,549.0 903.5,548.5 905.5,548.3 907.5,547.4 909.5,546.5 911.5,548.0 913.5,546.7 915.5,547.8 917.5,548.5 919.5,547.2 921.5,547.4 923.5,549.0 925.5,548.6 927.5,547.4 929.5,547.5 931.5,547.4 933.5,549.2 935.5,548.7 937.5,546.8 939.5,548.4 941.5,548.6 943.5,547.6 945.5,546.6 947.5,547.3 949.5,546.3 951.5,546.2 953.5,548.8 955.5,548.1 957.5,547.9 959.5,549.1 961.5,547.7 963.5,548.7 965.5,548.5 967.5,546.7 969.5,546.7 971.5,546.7 973.5,546.4 975.5,547.1 977.5,545.9 979.5,545.9 981.5,544.7" stroke="#22902a"/><polyline points="496.6,546.1 499.5,546.1 502.5,546.0 505.4,545.9 508.3,545.8 511.3,545.6 514.2,545.5 517.1,545.3 520.1,545.1 523.0,544.9 525.9,544.6 528.8,544.4 531.8,544.1 534.7,543.8 537.6,543.4 540.5,543.0 543.4,542.7 546.3,542.2 549.2,541.8 552.2,541.3 555.1,540.8 557.9,540.3 560.8,539.8 563.7,539.2 566.6,538.6 569.5,538.0 572.3,537.3 575.2,536.7 578.1,536.0 580.9,535.3 583.7,534.5 586.5,533.8 589.3,533.0 592.2,532.3 595.0,531.6 597.8,531.0 600.7,530.4 603.6,530.0 606.5,529.6 609.5,529.3 612.5,529.2 614.0,529.1 617.0,529.0 619.9,528.7 622.8,528.3 625.6,527.6 628.2,526.6 630.7,525.2 633.1,523.5 635.3,521.4 636.3,520.4 637.3,519.2 638.3,518.0 639.3,516.8 640.2,515.6 641.1,514.4 642.0,513.2 643.8,510.8 645.4,508.3 647.0,506.0 648.6,503.6 650.2,501.2 651.7,498.8 653.4,496.4 655.0,494.0 656.7,491.6 658.5,489.2 659.5,488.0 660.4,486.9 661.5,485.7 662.5,484.6 663.6,483.6 666.1,481.9 668.7,480.9 671.5,481.0 674.4,482.0 675.7,482.7 677.0,483.6 678.2,484.5 680.4,486.5 682.3,488.7 684.0,491.1 685.5,493.6 686.9,496.1 688.3,498.8 689.7,501.4 691.2,503.9 692.8,506.4 694.4,508.9 696.1,511.3 697.8,513.7 699.4,516.0 701.1,518.3 703.0,520.6 705.0,522.7 706.1,523.7 707.3,524.7 708.6,525.6 710.0,526.5 711.4,527.3 712.9,527.9 714.3,528.4 717.2,528.9 720.0,528.6 722.5,527.5 724.9,525.9 727.0,523.8 727.9,522.7 728.8,521.4 730.4,518.9 731.8,516.3 732.9,513.6 733.9,510.8 734.8,508.0 735.6,505.2 736.3,502.3 737.1,499.5 737.8,496.6 738.4,493.7 739.0,490.9 739.6,488.0 740.2,485.1 740.7,482.2 741.2,479.3 741.7,476.5 742.2,473.6 742.7,470.7 743.1,467.8 743.5,464.9 743.9,462.0 744.3,459.0 744.7,456.1 745.1,453.2 745.5,450.3 745.9,447.4 746.3,444.5 746.6,441.6 747.0,438.7 747.3,435.8 747.7,432.8 748.0,429.9 748.4,427.0 748.7,424.1 749.0,421.2 749.3,418.3 749.7,415.3 750.0,412.4 750.3,409.5 750.6,406.6 750.9,403.6 751.2,400.7 751.5,397.8 751.8,394.9 752.1,391.9 752.3,389.0 752.6,386.1 752.9,383.2 753.2,380.2 753.4,377.3 753.7,374.4 754.0,371.5 754.2,368.5 754.5,365.6 754.7,362.7 755.0,359.7 755.2,356.8 755.5,353.9 755.7,351.0 756.0,348.0 756.2,345.1 756.5,342.2 756.7,339.2 756.9,336.3 757.2,333.4 757.4,330.4 757.6,327.5 757.9,324.6 758.1,321.7 758.3,318.7 758.6,315.8 758.8,312.9 759.0,309.9 759.3,307.0 759.5,304.1 759.7,301.1 759.9,298.2 760.2,295.3 760.4,292.4 760.6,289.4 760.9,286.5 761.1,283.6 761.3,280.6 761.6,277.7 761.8,274.8 762.0,271.9 762.3,268.9 762.5,266.0 762.8,263.1 763.0,260.2 763.3,257.2 763.5,254.3 763.7,251.4 764.0,248.5 764.3,245.6 764.5,242.6 764.8,239.7 765.0,236.8 765.3,233.9 765.6,231.0 765.8,228.0 766.1,225.1 766.4,222.2 766.7,219.3 766.9,216.4 767.2,213.4 767.5,210.5 767.8,207.6 768.1,204.7 768.4,201.7 768.7,198.8 769.0,195.9 769.3,193.0 769.6,190.0 770.0,187.1 770.3,184.2 770.6,181.2 771.0,178.3 771.3,175.3 771.7,172.4 772.0,169.5 772.4,166.5 772.8,163.6 773.6,160.7 774.1,159.2 774.7,157.8 775.5,156.5 777.1,155.1 778.6,156.3 779.9,159.0 780.4,160.4 780.8,161.9 781.6,164.8 782.2,167.7 782.7,170.6 783.3,173.5 783.8,176.4 784.3,179.4 784.7,182.3 785.2,185.2 785.6,188.1 786.0,191.0 786.4,194.0 786.8,196.9 787.1,199.8 787.5,202.7 787.8,205.6 788.1,208.6 788.4,211.5 788.7,214.4 789.0,217.3 789.3,220.2 789.6,223.2 789.8,226.1 790.1,229.0 790.3,231.9 790.6,234.9 790.9,237.8 791.1,240.7 791.3,243.6 791.6,246.5 791.8,249.5 792.1,252.4 792.3,255.3 792.5,258.2 792.8,261.2 793.0,264.1 793.2,267.0 793.5,269.9 793.7,272.9 793.9,275.8 794.2,278.7 794.4,281.7 794.6,284.6 794.8,287.5 795.1,290.4 795.3,293.4 795.5,296.3 795.7,299.2 796.0,302.1 796.2,305.1 796.4,308.0 796.6,310.9 796.9,313.9 797.1,316.8 797.3,319.7 797.5,322.6 797.8,325.6 798.0,328.5 798.2,331.4 798.5,334.3 798.7,337.3 798.9,340.2 799.2,343.1 799.4,346.1 799.6,349.0 799.9,351.9 800.1,354.8 800.4,357.8 800.6,360.7 800.9,363.6 801.1,366.6 801.4,369.5 801.7,372.4 801.9,375.3 802.2,378.3 802.5,381.2 802.7,384.1 803.0,387.0 803.3,390.0 803.6,392.9 803.9,395.8 804.2,398.7 804.5,401.7 804.8,404.6 805.1,407.5 805.4,410.4 805.7,413.4 806.0,416.3 806.4,419.2 806.7,422.1 807.0,425.1 807.4,428.0 807.7,430.9 808.1,433.8 808.4,436.8 808.8,439.7 809.2,442.6 809.5,445.5 809.9,448.4 810.3,451.4 810.7,454.3 811.2,457.2 811.6,460.1 812.1,463.0 812.6,465.9 813.1,468.8 813.6,471.7 814.2,474.5 814.8,477.4 815.4,480.3 816.1,483.1 816.8,486.0 817.6,488.8 818.4,491.6 819.2,494.4 820.1,497.2 821.0,500.0 822.0,502.7 823.0,505.5 824.1,508.2 825.3,510.9 826.5,513.6 827.7,516.3 829.1,518.9 830.5,521.6 832.0,524.1 833.7,526.6 835.4,528.9 837.4,531.1 839.5,533.1 841.8,534.9 844.3,536.6 846.8,538.0 849.5,539.4 850.9,540.0 853.7,541.1 856.5,542.1 859.3,543.0 862.1,543.8 865.0,544.5 867.9,545.0 870.7,545.5 873.6,546.0 876.5,546.3 879.5,546.6 882.4,546.8 885.3,547.0 888.2,547.2 891.2,547.3 894.1,547.4 897.0,547.5 900.0,547.5 902.9,547.6 905.9,547.6 908.8,547.7 911.8,547.7 914.7,547.8 917.6,547.9 920.6,547.9 923.5,547.9 926.5,548.0 929.4,548.0 932.3,548.1 935.3,548.1 938.2,548.2 941.1,548.2 944.1,548.2 947.0,548.3 950.0,548.3 952.9,548.3 955.8,548.4 958.8,548.4 961.7,548.4 964.7,548.4 967.6,548.5 970.5,548.5 973.5,548.5 976.4,548.5 979.3,548.6 982.3,548.6 985.2,548.6 988.2,548.6 991.1,548.6 994.0,548.7 997.0,548.7 999.9,548.7 1002.8,548.7 1005.8,548.7 1008.7,548.7 1011.6,548.7 1014.6,548.7 1017.5,548.8 1020.5,548.8 1023.4,548.8 1026.3,548.8 1029.3,548.8 1032.2,548.8 1035.1,548.8 1038.1,548.8 1041.0,548.8 1043.9,548.8 1046.9,548.8 1049.8,548.8 1052.8,548.8 1055.7,548.9 1058.6,548.9 1061.6,548.9 1064.5,548.9 1067.4,548.9 1070.4,548.9 1073.3,548.9 1076.3,548.9 1079.2,548.9 1082.1,548.9 1085.1,548.9 1088.0,548.9 1090.9,548.9 1093.9,548.9 1096.8,548.9 1099.8,548.9 1102.7,549.0 1105.6,549.0 1108.6,549.0 1111.5,549.0 1114.5,549.0 1117.4,549.0 1117.4,549.0" stroke="#ffc0cb"/></g></svg>
<svg class="a" style="left:0;top:0" width="1138" height="713"><g stroke="#000" stroke-width="1" shape-rendering="crispEdges" fill="none"><path d="M488.5 115V550"/><path d="M480 549.5H488"/><path d="M484 537.5H488"/><path d="M484 525.5H488"/><path d="M484 513.5H488"/><path d="M484 501.5H488"/><path d="M480 489.5H488"/><path d="M484 477.5H488"/><path d="M484 465.5H488"/><path d="M484 453.5H488"/><path d="M484 441.5H488"/><path d="M480 429.5H488"/><path d="M484 417.5H488"/><path d="M484 404.5H488"/><path d="M484 392.5H488"/><path d="M484 380.5H488"/><path d="M480 368.5H488"/><path d="M484 356.5H488"/><path d="M484 344.5H488"/><path d="M484 332.5H488"/><path d="M484 320.5H488"/><path d="M480 308.5H488"/><path d="M484 296.5H488"/><path d="M484 284.5H488"/><path d="M484 272.5H488"/><path d="M484 260.5H488"/><path d="M480 248.5H488"/><path d="M484 236.5H488"/><path d="M484 224.5H488"/><path d="M484 212.5H488"/><path d="M484 199.5H488"/><path d="M480 187.5H488"/><path d="M484 175.5H488"/><path d="M484 163.5H488"/><path d="M484 151.5H488"/><path d="M484 139.5H488"/><path d="M480 127.5H488"/><path d="M484 115.5H488"/><path d="M497 560.5H1117"/><path d="M497.5 560V568"/><path d="M522.5 560V564"/><path d="M546.5 560V564"/><path d="M571.5 560V564"/><path d="M596.5 560V564"/><path d="M620.5 560V568"/><path d="M645.5 560V564"/><path d="M669.5 560V564"/><path d="M694.5 560V564"/><path d="M718.5 560V564"/><path d="M743.5 560V568"/><path d="M768.5 560V564"/><path d="M792.5 560V564"/><path d="M817.5 560V564"/><path d="M841.5 560V564"/><path d="M866.5 560V568"/><path d="M891.5 560V564"/><path d="M915.5 560V564"/><path d="M940.5 560V564"/><path d="M964.5 560V564"/><path d="M989.5 560V568"/><path d="M1014.5 560V564"/><path d="M1038.5 560V564"/><path d="M1063.5 560V564"/><path d="M1087.5 560V564"/><path d="M1112.5 560V568"/></g></svg>
<div class="a t" style="left:400px;width:75.00px;text-align:right;top:542px;line-height:15px;font-size:13px;letter-spacing:0.000px">0</div>
<div class="a t" style="left:400px;width:76.88px;text-align:right;top:482px;line-height:15px;font-size:13px;letter-spacing:1.880px">100</div>
<div class="a t" style="left:400px;width:76.38px;text-align:right;top:422px;line-height:15px;font-size:13px;letter-spacing:1.380px">200</div>
<div class="a t" style="left:400px;width:76.88px;text-align:right;top:361px;line-height:15px;font-size:13px;letter-spacing:1.880px">300</div>
<div class="a t" style="left:400px;width:76.88px;text-align:right;top:301px;line-height:15px;font-size:13px;letter-spacing:1.875px">400</div>
<div class="a t" style="left:400px;width:76.88px;text-align:right;top:241px;line-height:15px;font-size:13px;letter-spacing:1.880px">500</div>
<div class="a t" style="left:400px;width:76.38px;text-align:right;top:180px;line-height:15px;font-size:13px;letter-spacing:1.380px">600</div>
<div class="a t" style="left:400px;width:76.38px;text-align:right;top:120px;line-height:15px;font-size:13px;letter-spacing:1.380px">700</div>
<div class="a t" style="left:467.6px;width:60px;text-align:center;top:571.5px;line-height:15px;font-size:13px;letter-spacing:0.000px;text-indent:0.000px">0</div>
<div class="a t" style="left:590.6px;width:60px;text-align:center;top:571.5px;line-height:15px;font-size:13px;letter-spacing:1.850px;text-indent:1.850px">50</div>
<div class="a t" style="left:713.6px;width:60px;text-align:center;top:571.5px;line-height:15px;font-size:13px;letter-spacing:1.880px;text-indent:1.880px">100</div>
<div class="a t" style="left:836.5px;width:60px;text-align:center;top:571.5px;line-height:15px;font-size:13px;letter-spacing:1.880px;text-indent:1.880px">150</div>
<div class="a t" style="left:959.5px;width:60px;text-align:center;top:571.5px;line-height:15px;font-size:13px;letter-spacing:1.380px;text-indent:1.380px">200</div>
<div class="a t" style="left:1082.5px;width:60px;text-align:center;top:571.5px;line-height:15px;font-size:13px;letter-spacing:1.380px;text-indent:1.380px">250</div>
<div class="a t" style="left:756px;width:100px;text-align:center;top:587px;line-height:15px;font-size:15px;font-weight:bold">Time [a.u.]</div>
<div class="a t" style="left:382px;width:100px;text-align:center;top:326px;line-height:15px;font-size:15px;font-weight:bold;transform:rotate(-90deg)">I(t) [a.u.]</div></body></html>
